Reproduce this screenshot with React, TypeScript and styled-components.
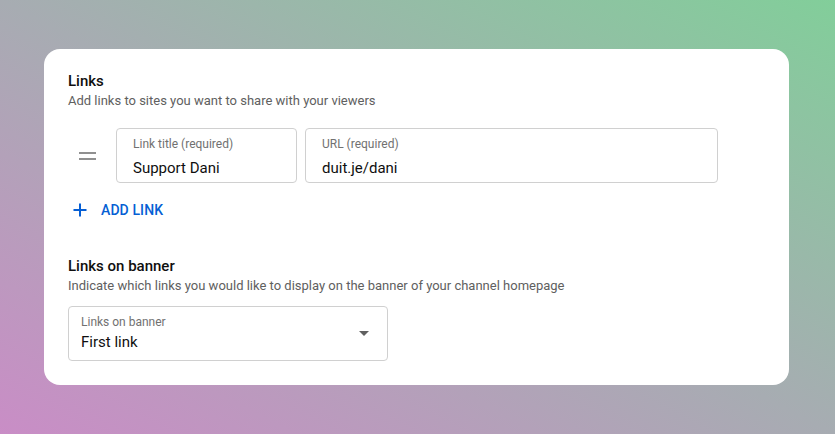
import React from 'react'
import styled, { createGlobalStyle } from 'styled-components'

const GlobalStyle = createGlobalStyle`
  html, body {
    margin: 0;
    padding: 0;
  }
  body {
    font-family: Roboto, "Liberation Sans", Arial, sans-serif;
    background: linear-gradient(to top right, #c98dc6 0%, #a7acb2 50%, #82ce9a 100%);
    min-height: 100vh;
  }
  #root {
    min-height: 100vh;
    display: flex;
    align-items: center;
    justify-content: center;
  }
`

const Card = styled.div`
  width: 745px;
  height: 336px;
  margin-right: 2px;
  box-sizing: border-box;
  background: #fff;
  border-radius: 16px;
  padding: 21px 24px 24px;
  display: flex;
  flex-direction: column;
`

const Section = styled.section<{ $top?: number }>`
  display: flex;
  flex-direction: column;
  margin-top: ${({ $top }) => $top ?? 0}px;
`

const Title = styled.h2`
  margin: 0;
  font-size: 15px;
  line-height: 22px;
  font-weight: 500;
  color: #0f0f0f;
`

const Subtitle = styled.p`
  margin: 0;
  font-size: 13px;
  line-height: 18px;
  color: #606060;
`

const LinkRow = styled.div`
  display: flex;
  align-items: center;
  margin-top: 18px;
  width: 650px;
`

const Handle = styled.div`
  width: 48px;
  flex: none;
  display: flex;
  align-items: center;
  padding-left: 11px;
  box-sizing: border-box;
`

const Field = styled.div<{ $width: number; $gap?: number }>`
  width: ${({ $width }) => $width}px;
  margin-left: ${({ $gap }) => $gap ?? 0}px;
  height: 55px;
  box-sizing: border-box;
  border: 1px solid #d0d0d0;
  border-radius: 4px;
  padding: 7px 16px;
  display: flex;
  flex-direction: column;
`

const FieldLabel = styled.span`
  font-size: 12px;
  line-height: 16px;
  color: #717171;
`

const FieldValue = styled.span<{ $gap?: number }>`
  margin-top: ${({ $gap }) => $gap ?? 4}px;
  font-size: 15px;
  line-height: 24px;
  color: #0f0f0f;
`

const AddButton = styled.button`
  align-self: flex-start;
  display: flex;
  align-items: center;
  gap: 13px;
  height: 36px;
  margin-top: 9px;
  padding: 0 8px 0 4px;
  border: none;
  background: transparent;
  font-family: Roboto, "Liberation Sans", Arial, sans-serif;
  font-size: 14px;
  font-weight: 500;
  letter-spacing: 0.1px;
  color: #065fd4;
  cursor: pointer;
`

const Select = styled.div`
  margin-top: 11px;
  width: 320px;
  height: 55px;
  box-sizing: border-box;
  border: 1px solid #d0d0d0;
  border-radius: 4px;
  padding: 7px 12px;
  display: flex;
  align-items: center;
  justify-content: space-between;
`

const SelectText = styled.div`
  display: flex;
  flex-direction: column;
`

const Arrow = styled.span`
  width: 0;
  height: 0;
  margin-right: 6px;
  border-left: 5px solid transparent;
  border-right: 5px solid transparent;
  border-top: 5px solid #606060;
`

const DragIcon = () => (
  <svg width="17" height="8" viewBox="0 0 17 8">
    <rect x="0" y="0" width="17" height="2" fill="#909090" />
    <rect x="0" y="6" width="17" height="2" fill="#909090" />
  </svg>
)

const PlusIcon = () => (
  <svg width="16" height="16" viewBox="0 0 16 16">
    <path d="M8 1.5v13M1.5 8h13" stroke="#065fd4" strokeWidth="2" fill="none" />
  </svg>
)

export default function App() {
  return (
    <>
      <GlobalStyle />
      <Card>
        <Section>
          <Title>Links</Title>
          <Subtitle>Add links to sites you want to share with your viewers</Subtitle>
          <LinkRow>
            <Handle>
              <DragIcon />
            </Handle>
            <Field $width={181}>
              <FieldLabel>Link title (required)</FieldLabel>
              <FieldValue>Support Dani</FieldValue>
            </Field>
            <Field $width={413} $gap={8}>
              <FieldLabel>URL (required)</FieldLabel>
              <FieldValue>duit.je/dani</FieldValue>
            </Field>
          </LinkRow>
          <AddButton>
            <PlusIcon />
            ADD LINK
          </AddButton>
        </Section>
        <Section $top={27}>
          <Title>Links on banner</Title>
          <Subtitle>Indicate which links you would like to display on the banner of your channel homepage</Subtitle>
          <Select>
            <SelectText>
              <FieldLabel>Links on banner</FieldLabel>
              <FieldValue $gap={0}>First link</FieldValue>
            </SelectText>
            <Arrow />
          </Select>
        </Section>
      </Card>
    </>
  )
}
